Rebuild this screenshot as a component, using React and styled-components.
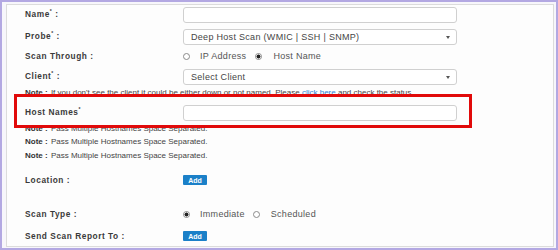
import React from "react";
import styled, { createGlobalStyle } from "styled-components";

const Global = createGlobalStyle`
  html, body { margin: 0; padding: 0; background: #ffffff; }
  body { font-family: "Liberation Sans", Arial, sans-serif; }
`;

const Frame = styled.div`
  width: 558px;
  height: 250px;
  box-sizing: border-box;
  border: 2px solid #b3a8e2;
  padding: 2px 2px 1px 4px;
  background: #f7f6fb;
`;

const Panel = styled.div`
  position: relative;
  height: 100%;
  box-sizing: border-box;
  border: 1px solid #dcdcdc;
  background: #fdfdfd;
  padding: 2px 0 0 18px;
  display: flex;
  flex-direction: column;
`;

const Row = styled.div`
  display: grid;
  grid-template-columns: 158px 274px;
  align-items: center;
  height: ${(p) => p.$h || 16}px;
  margin-top: ${(p) => p.$top || 0}px;
`;

const Label = styled.div`
  font-size: 8.3px;
  font-weight: bold;
  color: #3a3a3a;
  letter-spacing: 0.55px;
  white-space: nowrap;
  margin-top: ${(p) => p.$shift ?? -1}px;
`;

const Star = styled.sup`
  font-size: 5px;
  vertical-align: top;
  position: relative;
  top: -1px;
`;

const Input = styled.div`
  height: 16px;
  box-sizing: border-box;
  border: 1px solid #d0d0d0;
  border-radius: 3px;
  background: #fff;
`;

const Select = styled(Input)`
  display: flex;
  align-items: center;
  justify-content: space-between;
  padding: 0 6px 0 7px;
  font-size: 9px;
  letter-spacing: 0.3px;
  color: #454545;
`;

const Caret = styled.span`
  width: 0;
  height: 0;
  border-left: 2.5px solid transparent;
  border-right: 2.5px solid transparent;
  border-top: 3px solid #555;
`;

const Radios = styled.div`
  display: flex;
  align-items: center;
  font-size: 9px;
  letter-spacing: 0.3px;
  color: #555;
`;

const Radio = styled.span`
  width: 7px;
  height: 7px;
  box-sizing: border-box;
  border-radius: 50%;
  border: 1px solid #8a8a8a;
  background: ${(p) => (p.$on ? "radial-gradient(circle, #222 0 1.8px, #fff 2.2px)" : "#fff")};
  margin: 0 ${(p) => p.$gap || 10}px 0 ${(p) => p.$lead || 0}px;
  display: inline-block;
`;

const Note = styled.div`
  height: 10px;
  margin-top: ${(p) => p.$top || 0}px;
  display: flex;
  align-items: center;
  font-size: 8px;
  color: #444;
  white-space: nowrap;
`;

const NoteKey = styled.b`
  color: #333;
  margin-right: 1px;
`;

const Link = styled.span`
  color: #2a7fd4;
`;

const Actions = styled.div`
  display: flex;
  align-items: center;
  height: 100%;
`;

const AddButton = styled.span`
  display: flex;
  align-items: center;
  justify-content: center;
  width: 24px;
  height: 10px;
  background: #1b80c8;
  color: #fff;
  font-size: 7px;
  line-height: 1;
  font-weight: bold;
  border-radius: 1px;
`;

const Highlight = styled.div`
  position: absolute;
  left: 7px;
  top: 89px;
  width: 458px;
  height: 34px;
  box-sizing: border-box;
  border: 3px solid #e10a0a;
  pointer-events: none;
`;

export default function App() {
  return (
    <>
      <Global />
      <Frame>
        <Panel>
          <Row>
            <Label $shift={-2}>Name<Star>*</Star> :</Label>
            <Input />
          </Row>
          <Row $top={6}>
            <Label $shift={-2}>Probe<Star>*</Star> :</Label>
            <Select>
              <span>Deep Host Scan (WMIC | SSH | SNMP)</span>
              <Caret />
            </Select>
          </Row>
          <Row $top={5} $h={12}>
            <Label>Scan Through :</Label>
            <Radios>
              <Radio />
              IP Address
              <Radio $on $lead={9} $gap={11} />
              Host Name
            </Radios>
          </Row>
          <Row $top={7}>
            <Label $shift={-2}>Client<Star>*</Star> :</Label>
            <Select>
              <span>Select Client</span>
              <Caret />
            </Select>
          </Row>
          <Note $top={2}>
            <NoteKey>Note :</NoteKey>&nbsp;If you don't see the client it could be either down or not named. Please&nbsp;<Link>click here</Link>&nbsp;and check the status ....
          </Note>
          <Row $top={8}>
            <Label $shift={-2}>Host Names<Star>*</Star></Label>
            <Input />
          </Row>
          <Note $top={2}>
            <NoteKey>Note :</NoteKey>&nbsp;Pass Multiple Hostnames Space Separated.
          </Note>
          <Note $top={3}>
            <NoteKey>Note :</NoteKey>&nbsp;Pass Multiple Hostnames Space Separated.
          </Note>
          <Note $top={4}>
            <NoteKey>Note :</NoteKey>&nbsp;Pass Multiple Hostnames Space Separated.
          </Note>
          <Row $top={15} $h={10}>
            <Label $shift={0}>Location :</Label>
            <Actions><AddButton>Add</AddButton></Actions>
          </Row>
          <Row $top={24} $h={10}>
            <Label $shift={0}>Scan Type :</Label>
            <Radios>
              <Radio $on />
              Immediate
              <Radio $lead={8} $gap={11} />
              Scheduled
            </Radios>
          </Row>
          <Row $top={12} $h={10}>
            <Label $shift={0}>Send Scan Report To :</Label>
            <Actions><AddButton>Add</AddButton></Actions>
          </Row>
          <Highlight />
        </Panel>
      </Frame>
    </>
  );
}
